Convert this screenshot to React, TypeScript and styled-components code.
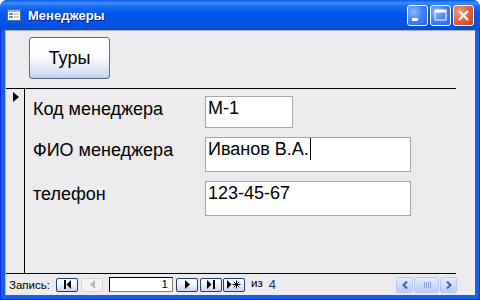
import React from "react";
import styled, { createGlobalStyle } from "styled-components";

const GlobalStyle = createGlobalStyle`
  html, body {
    margin: 0;
    padding: 0;
    background: #ffffff;
  }
  body {
    font-family: "Liberation Sans", Arial, sans-serif;
  }
`;

const Window = styled.div`
  width: 480px;
  height: 300px;
  display: flex;
  flex-direction: column;
  overflow: hidden;
  border-radius: 7px 7px 0 0;
  background: #1660e8;
`;

const TitleBar = styled.div`
  height: 30px;
  flex: none;
  display: flex;
  align-items: center;
  padding: 0 6px 0 7px;
  box-sizing: border-box;
  background: linear-gradient(
    to bottom,
    #0a5ae8 0%,
    #3d8dfc 10%,
    #1a6cf2 22%,
    #0057ea 45%,
    #0054e6 75%,
    #0a4fd8 92%,
    #0a47cc 100%
  );
`;

const Title = styled.div`
  margin-left: 7px;
  color: #ffffff;
  font-weight: bold;
  font-size: 13px;
  text-shadow: 1px 1px 0 #0a1c88;
  flex: 1;
`;

const Controls = styled.div`
  display: flex;
  gap: 2px;
  margin-top: 1px;
`;

const CtrlButton = styled.div<{ $close?: boolean }>`
  width: 21px;
  height: 21px;
  box-sizing: border-box;
  border: 1px solid #ffffff;
  border-radius: 3px;
  display: flex;
  align-items: center;
  justify-content: center;
  background: ${(p) =>
    p.$close
      ? "radial-gradient(circle at 30% 30%, #f0a38a 0%, #e5683e 45%, #cc4114 100%)"
      : "radial-gradient(circle at 30% 30%, #8fb6ff 0%, #4a86f7 45%, #2160e6 100%)"};
`;

const Frame = styled.div`
  flex: 1;
  display: flex;
  padding: 0 5px 5px 5px;
  background: #1660e8;
  box-shadow: inset 1px 0 #0831d9, inset -1px 0 #0831d9, inset 0 -1px #0831d9;
`;

const Client = styled.div`
  flex: 1;
  display: flex;
  flex-direction: column;
  background: #ecebed;
  border-left: 1px solid #a8b4cc;
  border-top: 1px solid #a8b4cc;
  border-right: 1px solid #f4f4f4;
`;

const Header = styled.div`
  width: 450px;
  height: 58px;
  flex: none;
  box-sizing: border-box;
  border-bottom: 1px solid #000000;
  padding: 6px 0 0 23px;
`;

const FormButton = styled.div`
  width: 81px;
  height: 42px;
  box-sizing: border-box;
  border: 1px solid #536b91;
  border-radius: 3px;
  display: flex;
  align-items: center;
  justify-content: center;
  font-size: 18px;
  color: #000000;
  background: linear-gradient(to bottom, #ffffff 0%, #fbfcfe 45%, #e3eaf6 75%, #c7d4ea 100%);
  box-shadow: inset 0 -1px #b4c4e0;
`;

const Detail = styled.div`
  width: 450px;
  height: 185px;
  flex: none;
  box-sizing: border-box;
  display: flex;
  border-bottom: 1px solid #000000;
`;

const Selector = styled.div`
  width: 19px;
  flex: none;
  box-sizing: border-box;
  border-right: 1px solid #000000;
  padding: 3px 0 0 7px;
`;

const Arrow = styled.div`
  width: 0;
  height: 0;
  border-top: 5px solid transparent;
  border-bottom: 5px solid transparent;
  border-left: 6px solid #000000;
`;

const Fields = styled.div`
  flex: 1;
  display: flex;
  flex-direction: column;
  padding: 7px 0 0 8px;
  gap: 9px;
`;

const Row = styled.div<{ $h: number }>`
  display: flex;
  height: ${(p) => p.$h}px;
`;

const Label = styled.div`
  width: 172px;
  flex: none;
  font-size: 18px;
  line-height: 22px;
  padding-top: 2px;
  color: #000000;
`;

const Field = styled.div<{ $w: number }>`
  width: ${(p) => p.$w}px;
  height: 100%;
  box-sizing: border-box;
  border: 1px solid #a6a6a6;
  background: #ffffff;
  font-size: 18px;
  line-height: 22px;
  padding: 0 0 0 2px;
  color: #000000;
  white-space: nowrap;
`;

const Caret = styled.span`
  display: inline-block;
  width: 1px;
  height: 22px;
  background: #000000;
  vertical-align: top;
  margin-left: 1px;
`;

const NavBar = styled.div`
  flex: 1;
  display: flex;
  align-items: center;
  padding: 0 17px 0 3px;
  font-size: 11.5px;
  color: #000000;
`;

const NavLabel = styled.div`
  width: 47px;
  flex: none;
`;

const NavButton = styled.div<{ $disabled?: boolean; $gap?: number }>`
  width: 22px;
  height: 14px;
  box-sizing: border-box;
  margin-right: ${(p) => p.$gap ?? 0}px;
  border: 1px solid ${(p) => (p.$disabled ? "#cfd3da" : "#1d3f7c")};
  border-radius: 2px;
  display: flex;
  align-items: center;
  justify-content: center;
  background: ${(p) =>
    p.$disabled
      ? "#f4f4f4"
      : "linear-gradient(to bottom, #ffffff 0%, #eef2fa 50%, #c8d6ee 100%)"};
`;

const RecordBox = styled.div`
  width: 64px;
  height: 15px;
  box-sizing: border-box;
  margin-right: 3px;
  border: 1px solid #808080;
  border-top-color: #000000;
  border-left-color: #000000;
  background: #ffffff;
  text-align: right;
  padding-right: 4px;
  font-size: 11.5px;
  line-height: 13px;
`;

const Count = styled.div`
  margin-left: 6px;
  display: flex;
  gap: 6px;
  span:last-child {
    color: #1f3070;
    font-size: 13px;
  }
`;

const ScrollBar = styled.div`
  margin-left: auto;
  display: flex;
  gap: 1px;
  height: 16px;
`;

const ScrollPart = styled.div<{ $w: number }>`
  width: ${(p) => p.$w}px;
  height: 16px;
  box-sizing: border-box;
  border: 1px solid #b6c9f2;
  border-radius: 2px;
  display: flex;
  align-items: center;
  justify-content: center;
  background: linear-gradient(to bottom, #e3ebfd 0%, #cfdcfa 50%, #bccef6 100%);
`;

function TriRight({ color = "#000" }: { color?: string }) {
  return (
    <svg width="5" height="9" viewBox="0 0 5 9">
      <path d="M0 0 L5 4.5 L0 9 Z" fill={color} />
    </svg>
  );
}

export default function App() {
  return (
    <>
      <GlobalStyle />
      <Window>
        <TitleBar>
          <svg width="14" height="12" viewBox="0 0 14 12">
            <rect x="0.5" y="0.5" width="13" height="11" fill="#ffffff" stroke="#5a6e8c" />
            <rect x="1" y="1" width="12" height="2" fill="#9db4d8" />
            <rect x="2" y="4" width="4" height="2" fill="#7f8a99" />
            <rect x="7" y="4" width="5" height="2" fill="#c8cdd4" />
            <rect x="2" y="7" width="4" height="2" fill="#7f8a99" />
            <rect x="7" y="7" width="5" height="2" fill="#c8cdd4" />
          </svg>
          <Title>Менеджеры</Title>
          <Controls>
            <CtrlButton>
              <svg width="19" height="19" viewBox="0 0 19 19">
                <rect x="4" y="12" width="6" height="3" fill="#ffffff" />
              </svg>
            </CtrlButton>
            <CtrlButton>
              <svg width="19" height="19" viewBox="0 0 19 19">
                <rect x="4" y="4" width="11" height="10" fill="none" stroke="#ffffff" strokeWidth="1" />
                <rect x="4" y="4" width="11" height="2.5" fill="#ffffff" />
              </svg>
            </CtrlButton>
            <CtrlButton $close>
              <svg width="19" height="19" viewBox="0 0 19 19">
                <path d="M5 5 L14 14 M14 5 L5 14" stroke="#ffffff" strokeWidth="2.2" />
              </svg>
            </CtrlButton>
          </Controls>
        </TitleBar>
        <Frame>
          <Client>
            <Header>
              <FormButton>Туры</FormButton>
            </Header>
            <Detail>
              <Selector>
                <Arrow />
              </Selector>
              <Fields>
                <Row $h={32}>
                  <Label>Код менеджера</Label>
                  <Field $w={88}>М-1</Field>
                </Row>
                <Row $h={35}>
                  <Label>ФИО менеджера</Label>
                  <Field $w={206}>
                    Иванов В.А.
                    <Caret />
                  </Field>
                </Row>
                <Row $h={35}>
                  <Label>телефон</Label>
                  <Field $w={206}>123-45-67</Field>
                </Row>
              </Fields>
            </Detail>
            <NavBar>
              <NavLabel>Запись:</NavLabel>
              <NavButton $gap={3}>
                <svg width="9" height="9" viewBox="0 0 9 9">
                  <rect x="1" y="0" width="2" height="9" fill="#000" />
                  <path d="M8 0 L3.5 4.5 L8 9 Z" fill="#000" />
                </svg>
              </NavButton>
              <NavButton $disabled $gap={6}>
                <svg width="5" height="9" viewBox="0 0 5 9">
                  <path d="M5 0 L0 4.5 L5 9 Z" fill="#b8b8b8" />
                </svg>
              </NavButton>
              <RecordBox>1</RecordBox>
              <NavButton $gap={2}>
                <TriRight />
              </NavButton>
              <NavButton $gap={1}>
                <svg width="9" height="9" viewBox="0 0 9 9">
                  <path d="M0 0 L4.5 4.5 L0 9 Z" fill="#000" />
                  <rect x="6" y="0" width="2" height="9" fill="#000" />
                </svg>
              </NavButton>
              <NavButton>
                <svg width="14" height="9" viewBox="0 0 14 9">
                  <path d="M0 0 L4.5 4.5 L0 9 Z" fill="#000" />
                  <path
                    d="M9.5 0.5 V8.5 M5.5 4.5 H13.5 M6.7 1.7 L12.3 7.3 M12.3 1.7 L6.7 7.3"
                    stroke="#000"
                    strokeWidth="1"
                  />
                </svg>
              </NavButton>
              <Count>
                <span>из</span>
                <span>4</span>
              </Count>
              <ScrollBar>
                <ScrollPart $w={17}>
                  <svg width="6" height="8" viewBox="0 0 6 8">
                    <path d="M5 0.5 L1.5 4 L5 7.5" fill="none" stroke="#4d6185" strokeWidth="2" />
                  </svg>
                </ScrollPart>
                <ScrollPart $w={25}>
                  <svg width="8" height="6" viewBox="0 0 8 6">
                    <path d="M1.5 0 V6 M3.5 0 V6 M5.5 0 V6 M7.5 0 V6" stroke="#8aa4dc" strokeWidth="1" />
                  </svg>
                </ScrollPart>
                <ScrollPart $w={17}>
                  <svg width="6" height="8" viewBox="0 0 6 8">
                    <path d="M1 0.5 L4.5 4 L1 7.5" fill="none" stroke="#4d6185" strokeWidth="2" />
                  </svg>
                </ScrollPart>
              </ScrollBar>
            </NavBar>
          </Client>
        </Frame>
      </Window>
    </>
  );
}
